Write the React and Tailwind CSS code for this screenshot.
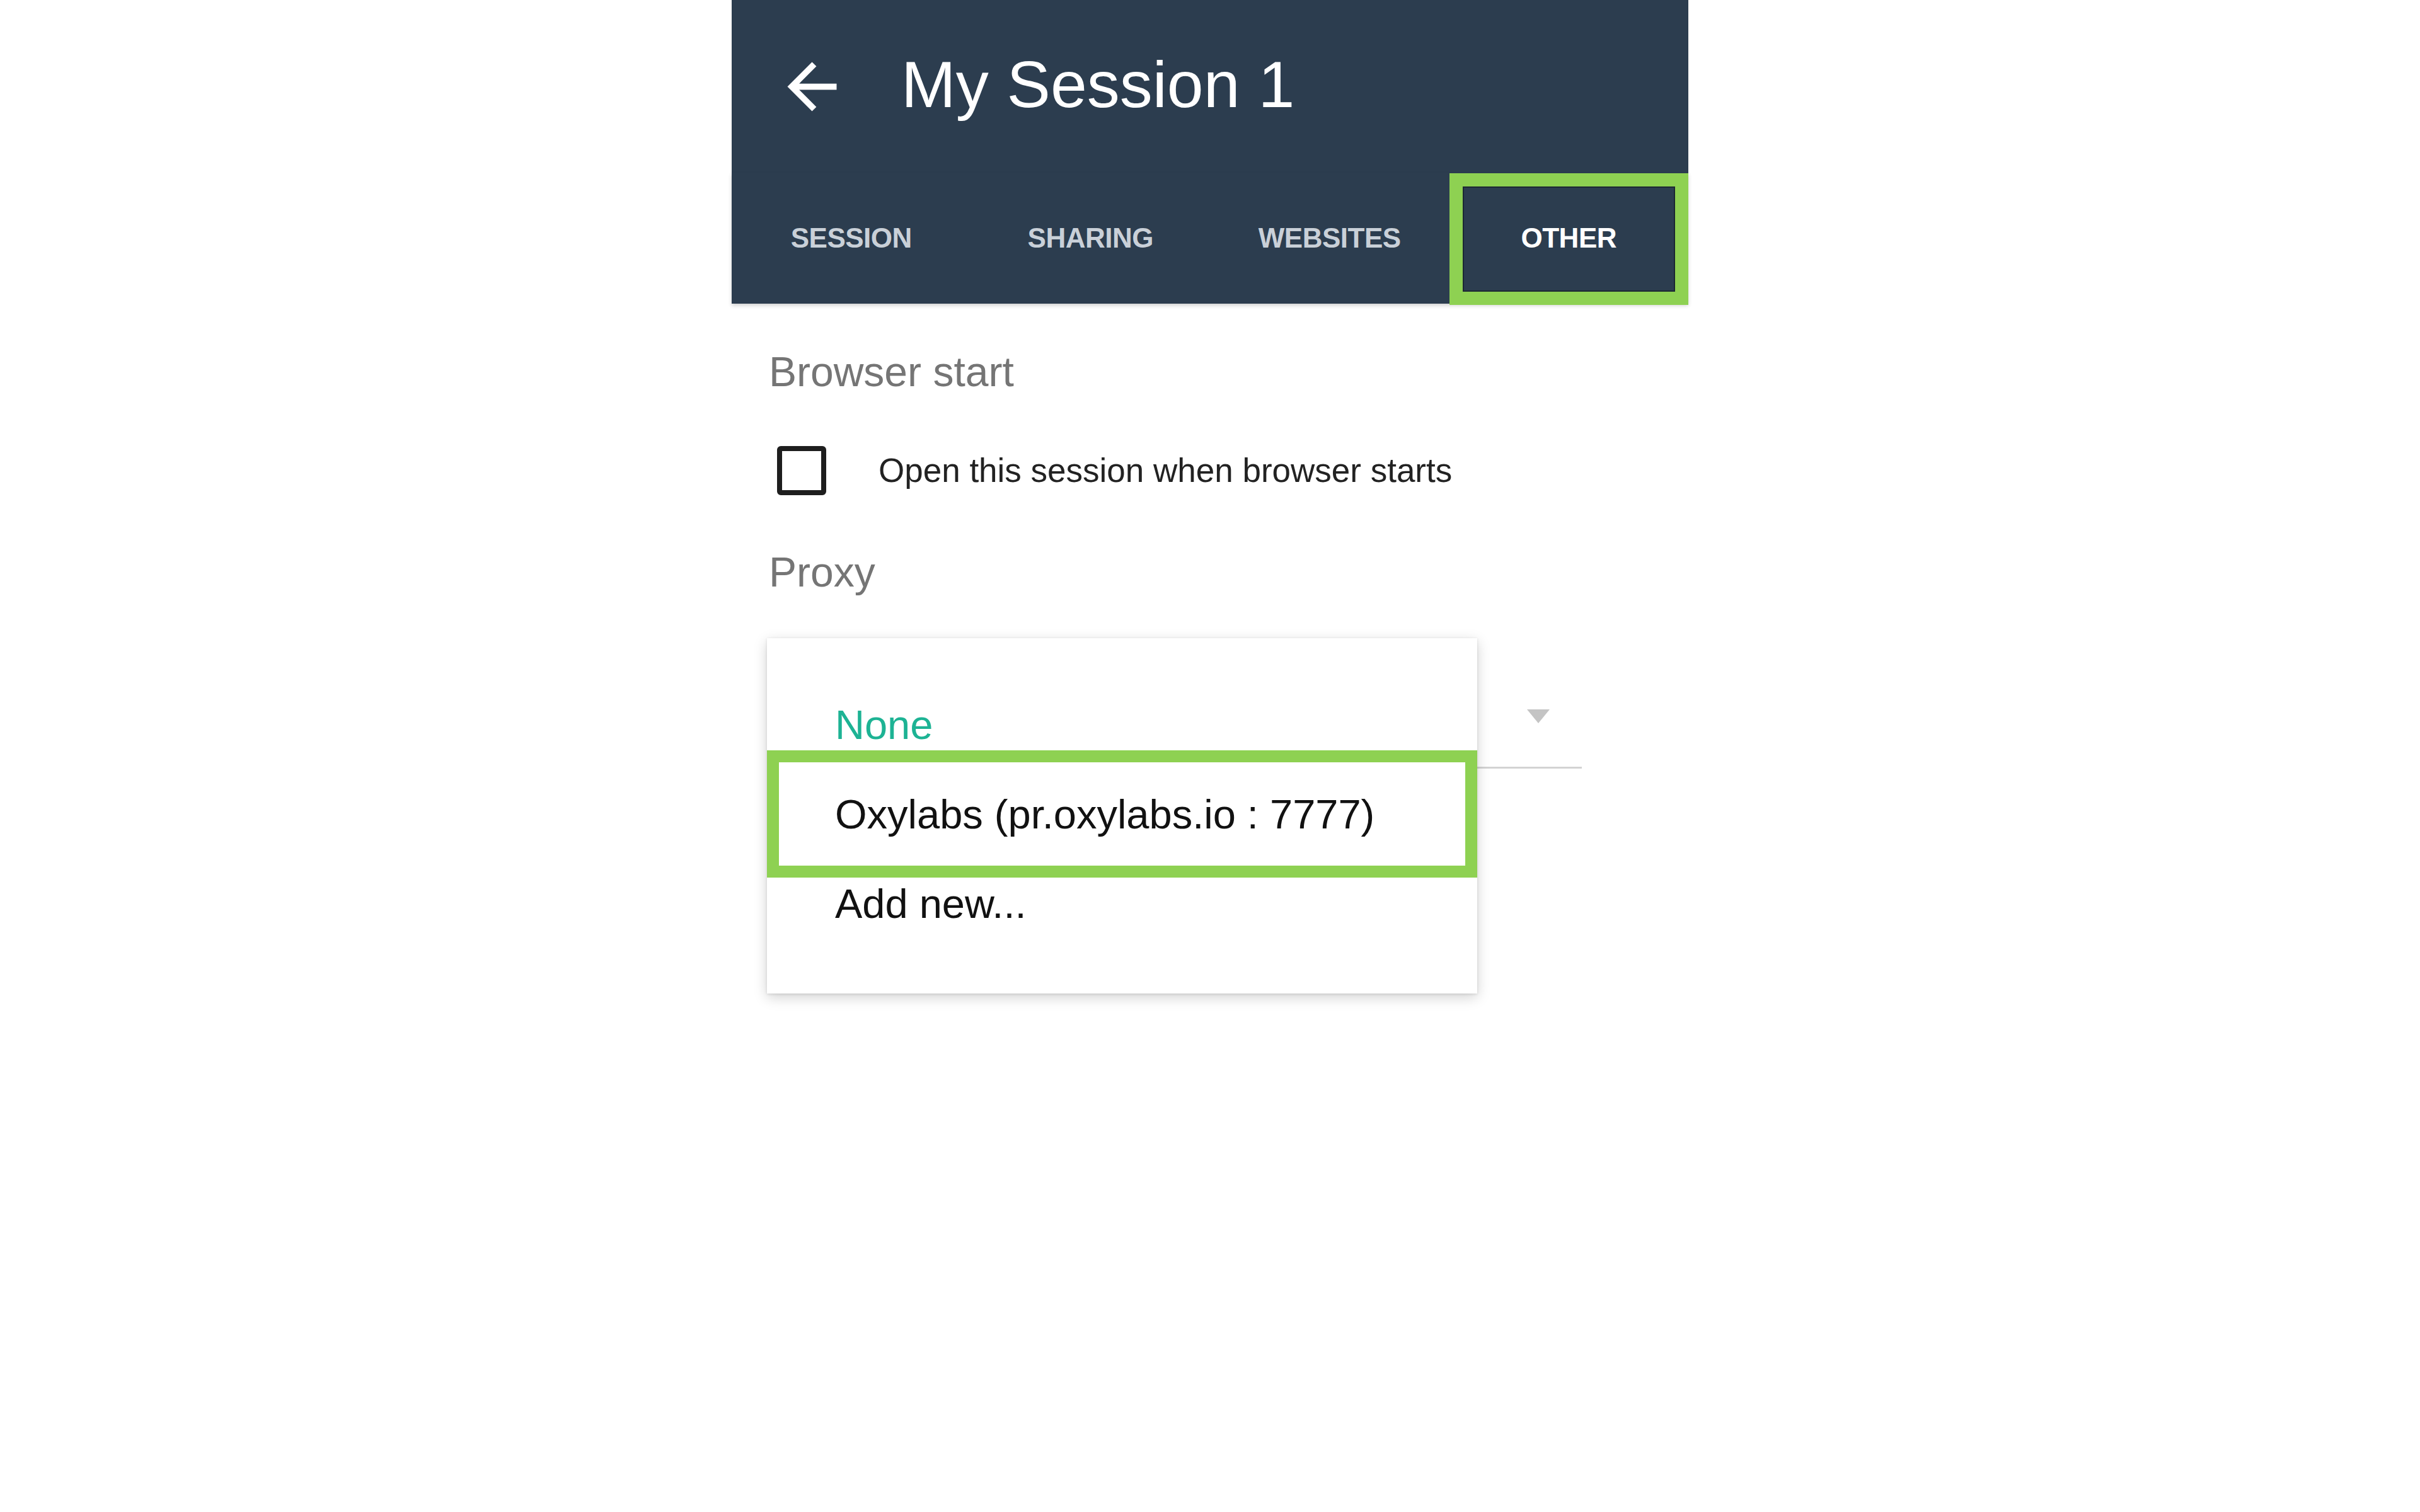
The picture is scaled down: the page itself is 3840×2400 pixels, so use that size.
import React from "react";

const font = { fontFamily: '"Liberation Sans", Arial, Helvetica, sans-serif' };

function ArrowBack() {
  return (
    <svg viewBox="0 0 24 24" className="w-[117px] h-[117px]" fill="#ffffff">
      <path d="M20 11H7.83l5.59-5.59L12 4l-8 8 8 8 1.41-1.41L7.83 13H20v-2z" />
    </svg>
  );
}

export default function App() {
  const tabs = ["SESSION", "SHARING", "WEBSITES", "OTHER"];
  return (
    <div className="w-full h-[2400px] bg-white flex justify-center" style={font}>
      <div className="w-[1518px] flex flex-col">
        <div className="bg-[#2c3d4f] h-[274px] flex items-center">
          <div className="ml-[69px] flex items-center">
            <ArrowBack />
          </div>
          <div className="ml-[83px] text-white text-[104px] leading-none pb-[6px]">My Session 1</div>
        </div>
        <div className="bg-[#2c3d4f] h-[208px] grid grid-cols-4 shadow-[0_3px_6px_rgba(0,0,0,0.18)]">
          {tabs.map((t, i) => (
            <div key={t} className="relative flex items-center justify-center">
              <span
                className={
                  "text-[44px] font-bold tracking-[-0.5px] " +
                  (i === 3 ? "text-white" : "text-[#c9d0d8]")
                }
              >
                {t}
              </span>
              {i === 3 && (
                <div className="absolute left-0 right-0 top-[1px] -bottom-[2px] border-[21px] border-[#8ed152]">
                  <div className="w-full h-full border-[2px] border-[#1c2833]" />
                </div>
              )}
            </div>
          ))}
        </div>
        <div className="px-[59px] flex flex-col">
          <div className="mt-[68px] text-[66px] leading-[80px] text-[#757575]">Browser start</div>
          <div className="mt-[78px] h-[78px] flex items-center">
            <div className="ml-[13px] w-[78px] h-[78px] border-[8px] border-[#1e1e1e] rounded-[6px]" />
            <div className="ml-[83px] text-[53px] text-[#222222]">Open this session when browser starts</div>
          </div>
          <div className="mt-[82px] text-[66px] leading-[80px] text-[#757575]">Proxy</div>
          <div className="relative w-[1290px] h-[272px] border-b-[3px] border-[#d3d3d3]">
            <div className="absolute right-[51px] top-[178px] w-0 h-0 border-l-[18px] border-r-[18px] border-t-[22px] border-l-transparent border-r-transparent border-t-[#c4c4c4]" />
            <div className="absolute left-[-3px] top-[65px] w-[1127px] bg-white shadow-[0_6px_20px_rgba(0,0,0,0.18),0_1px_4px_rgba(0,0,0,0.12)] pt-[67px] pb-[71px] flex flex-col">
              <div className="h-[142px] flex items-center pl-[108px] text-[65px] text-[#1db394]">None</div>
              <div className="relative h-[142px] flex items-center pl-[108px] text-[65px] text-[#111111]">
                Oxylabs (pr.oxylabs.io : 7777)
                <div className="absolute left-0 right-0 -top-[31px] -bottom-[29px] border-[19px] border-[#8ed152]" />
              </div>
              <div className="h-[142px] flex items-center pl-[108px] text-[65px] text-[#111111]">Add new...</div>
            </div>
          </div>
        </div>
      </div>
    </div>
  );
}
